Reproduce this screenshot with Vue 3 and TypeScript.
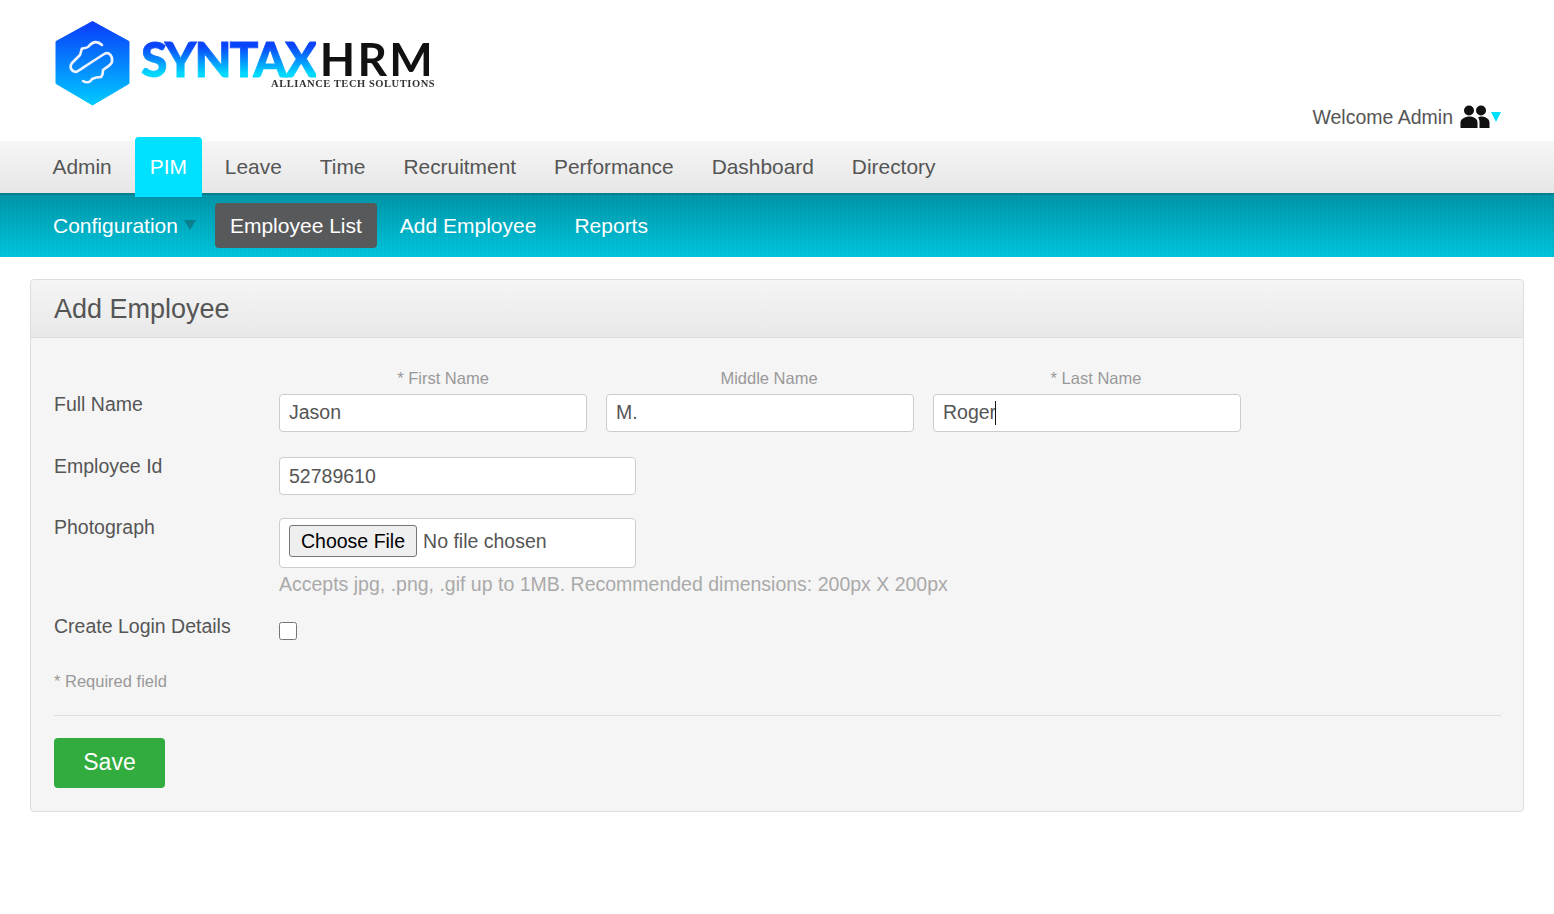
<template>
  <div class="page">
    <header class="top">
      <div class="logo">
        <svg class="hex" width="76" height="88" viewBox="0 0 76 88">
          <defs>
            <linearGradient id="hexFill" x1="0" y1="0" x2="0" y2="1">
              <stop offset="0" stop-color="#0a3cfa" />
              <stop offset="1" stop-color="#00cbff" />
            </linearGradient>
          </defs>
          <path d="M37.5 1.5 L74 21.5 L74 63.5 L37.5 85 L1 63.5 L1 21.5 Z" fill="url(#hexFill)" stroke="url(#hexFill)" stroke-width="1" stroke-linejoin="round" />
          <path d="M47 25 C43 21 38 21 34 26 C33 28 30 28 27 28.5 C26 30 26 33 25 35 L17 43 C14 47 16 51 21 52 C24 51 27 48 50 33.5 C54 32 58 36 57 42 C56 45 52 47 48 50 C48 53 47 56 46 57 C42 57 39 58 37 59 C35 63 31 63 28 61"
            fill="none" stroke="#eef3ff" stroke-width="2.6" stroke-linecap="round" stroke-linejoin="round" />
        </svg>
        <div class="brand">
          <div class="brand-name"><span class="syntax">SYNTAX</span><span class="hrm">HRM</span></div>
          <div class="tag">ALLIANCE TECH SOLUTIONS</div>
        </div>
      </div>
      <div class="welcome">
        <span>Welcome Admin</span>
        <svg class="people" width="30" height="24" viewBox="0 0 30 24">
          <circle cx="9" cy="5.5" r="5" />
          <circle cx="21" cy="5.5" r="5" />
          <path d="M0.5 23 V17.5 C0.5 14 5 11.5 9.5 11.5 C14 11.5 17.5 14 17.5 17.5 V23 Z" />
          <path d="M19.5 23 V17 C19.5 15 18.8 13.5 18 12.5 C19 12 20 11.5 21.5 11.5 C25.5 11.5 29.5 14 29.5 17.5 V23 Z" />
        </svg>
        <span class="tri"></span>
      </div>
    </header>

    <nav class="menu">
      <a v-for="item in mainMenu" :key="item" :class="{ active: item === 'PIM' }">{{ item }}</a>
    </nav>

    <nav class="submenu">
      <a class="config">Configuration<span class="tri-dark"></span></a>
      <a class="current">Employee List</a>
      <a>Add Employee</a>
      <a>Reports</a>
    </nav>

    <section class="panel">
      <h1 class="panel-head">Add Employee</h1>
      <form class="panel-body" @submit.prevent>
        <div class="row name-row">
          <label class="lbl">Full Name</label>
          <div class="names">
            <div v-for="n in names" :key="n.label" class="name-col">
              <div class="cap"><span v-if="n.required">* </span>{{ n.label }}</div>
              <div class="field">
                <input v-model="n.value" type="text" />
                <i v-if="n.caret" class="caret"></i>
              </div>
            </div>
          </div>
        </div>

        <div class="row id-row">
          <label class="lbl">Employee Id</label>
          <input v-model="employeeId" class="wide" type="text" />
        </div>

        <div class="row photo-row">
          <label class="lbl">Photograph</label>
          <div>
            <div class="file-box"><input type="file" /></div>
            <div class="hint">Accepts jpg, .png, .gif up to 1MB. Recommended dimensions: 200px X 200px</div>
          </div>
        </div>

        <div class="row login-row">
          <label class="lbl">Create Login Details</label>
          <input class="check" type="checkbox" />
        </div>

        <div class="required">* Required field</div>
        <hr />
        <button class="save" type="submit">Save</button>
      </form>
    </section>
  </div>
</template>

<script setup lang="ts">
import { ref } from 'vue'

interface NameField {
  label: string
  value: string
  required: boolean
  caret?: boolean
}

const mainMenu = ['Admin', 'PIM', 'Leave', 'Time', 'Recruitment', 'Performance', 'Dashboard', 'Directory']

const names = ref<NameField[]>([
  { label: 'First Name', value: 'Jason', required: true },
  { label: 'Middle Name', value: 'M.', required: false },
  { label: 'Last Name', value: 'Roger', required: true, caret: true },
])

const employeeId = ref('52789610')
</script>

<style>
body {
  background: #fff;
}
</style>

<style scoped>
.page {
  font-family: "Liberation Sans", Arial, sans-serif;
  color: #555;
  font-size: 19.5px;
  height: 914px;
  overflow: hidden;
}

.top {
  height: 141px;
  display: flex;
  justify-content: space-between;
  padding: 20px 53px 0 54px;
  box-sizing: border-box;
}

.logo {
  display: flex;
  height: 88px;
}

.hex {
  display: block;
  margin-left: 1px;
  filter: blur(0.4px);
}

.brand {
  margin-left: 10px;
  padding-top: 18px;
  width: 300px;
  filter: blur(0.35px);
}

.brand-name {
  display: flex;
  line-height: 42px;
  height: 42px;
}

.syntax {
  font-family: Lato, sans-serif;
  font-weight: 900;
  font-size: 48px;
  letter-spacing: -1.9px;
  background: linear-gradient(#0a44fa 20%, #00d8ff 85%);
  -webkit-background-clip: text;
  background-clip: text;
  color: transparent;
  -webkit-text-stroke: 0.8px transparent;
}

.hrm {
  font-family: Lato, sans-serif;
  font-weight: 700;
  font-size: 46px;
  letter-spacing: 2.2px;
  margin-left: 4px;
  color: #111;
}

.tag {
  font-family: "Liberation Serif", serif;
  font-weight: 700;
  font-size: 10.5px;
  letter-spacing: 0.55px;
  line-height: 12px;
  color: #333;
  margin: -2px 0 0 130px;
  white-space: nowrap;
}

.welcome {
  display: flex;
  align-items: center;
  height: 26px;
  margin-top: 84px;
}

.people {
  margin-left: 7px;
  fill: #111;
}

.tri {
  width: 0;
  height: 0;
  margin-left: 1px;
  border-left: 5px solid transparent;
  border-right: 5px solid transparent;
  border-top: 10px solid #00e1ff;
}

.menu {
  height: 52px;
  padding-left: 37.5px;
  display: flex;
  gap: 8px;
  background: linear-gradient(#f6f6f6, #e6e6e6);
  position: relative;
}

.menu a {
  padding: 0 15px;
  line-height: 52px;
  font-size: 20.9px;
}

.menu a.active {
  background: #00e1ff;
  color: #fff;
  border-radius: 4px 4px 0 0;
  height: 60px;
  margin-top: -4px;
  line-height: 60px;
  position: relative;
  z-index: 1;
}

.submenu {
  height: 64px;
  box-sizing: border-box;
  border-top: 2px solid #04808f;
  padding: 8px 0 0 38px;
  display: flex;
  gap: 8px;
  background:
    repeating-linear-gradient(90deg, rgba(0, 0, 0, 0.025) 0 2px, transparent 2px 4px),
    linear-gradient(#0096a8, #00c6de);
}

.submenu a {
  height: 45px;
  line-height: 45px;
  padding: 0 15px;
  color: #fff;
  font-size: 21px;
  border-radius: 4px;
}

.submenu a.config {
  padding-right: 29px;
  position: relative;
}

.submenu a.current {
  background: #58595b;
}

.tri-dark {
  position: absolute;
  right: 11px;
  top: 17px;
  width: 0;
  height: 0;
  border-left: 6px solid transparent;
  border-right: 6px solid transparent;
  border-top: 10px solid #0a7f8e;
}

.panel {
  margin: 22px 30px 0;
  height: 533px;
  box-sizing: border-box;
  border: 1px solid #ddd;
  border-radius: 4px;
  background: #f5f5f5;
}

.panel-head {
  margin: 0;
  height: 58px;
  box-sizing: border-box;
  line-height: 58px;
  padding-left: 23px;
  font-size: 27px;
  font-weight: 400;
  color: #555;
  background: linear-gradient(#f5f5f5, #e8e8e8);
  border-bottom: 1px solid #ddd;
  border-radius: 4px 4px 0 0;
}

.panel-body {
  padding: 0 22px 0 23px;
}

.row {
  display: flex;
  align-items: flex-start;
}

.lbl {
  width: 225px;
  flex: none;
  line-height: 24px;
  color: #555;
}

input[type="text"] {
  height: 38px;
  box-sizing: border-box;
  width: 308px;
  border: 1px solid #ccc;
  border-radius: 4px;
  padding: 0 9px 1px;
  font: inherit;
  color: #555;
  background: #fff;
  outline: none;
  display: block;
}

.name-row {
  padding-top: 30px;
}

.name-row .lbl {
  margin-top: 24px;
}

.names {
  display: flex;
  gap: 19px;
}

.cap {
  height: 26px;
  line-height: 20px;
  font-size: 16.5px;
  color: #999;
  text-align: center;
}

.name-col:nth-child(1) .cap {
  padding-left: 20px;
}

.name-col:nth-child(2) .cap,
.name-col:nth-child(3) .cap {
  padding-left: 18px;
}

.field {
  position: relative;
}

.caret {
  position: absolute;
  left: 62px;
  top: 7px;
  width: 1px;
  height: 24px;
  background: #111;
}

.id-row {
  margin-top: 25px;
}

.id-row .lbl {
  margin-top: -3px;
}

input.wide {
  width: 357px;
  padding-bottom: 0;
}

.photo-row {
  margin-top: 23px;
}

.photo-row .lbl {
  margin-top: -3px;
}

.file-box {
  width: 357px;
  height: 50px;
  box-sizing: border-box;
  border: 1px solid #ccc;
  border-radius: 4px;
  background: #fff;
  padding: 6px 9px;
}

.file-box input {
  font: inherit;
  color: #555;
  display: block;
}

.file-box input::file-selector-button {
  height: 32px;
  padding: 0 11px;
  margin-right: 6px;
  border: 1px solid #767676;
  border-radius: 3px;
  background: #efefef;
  color: #000;
  font: inherit;
}

.hint {
  margin-top: 4px;
  line-height: 24px;
  color: #aaa;
}

.login-row {
  margin-top: 19px;
}

.login-row .lbl {
  margin-top: -1px;
}

.check {
  width: 18px;
  height: 18px;
  margin: 7px 0 0;
}

.required {
  margin-top: 31px;
  font-size: 16.5px;
  line-height: 20px;
  color: #999;
}

hr {
  margin: 24px 0 22px;
  border: 0;
  border-top: 1px solid #ddd;
}

.save {
  display: block;
  width: 111px;
  height: 50px;
  padding: 0 0 2px;
  border: 0;
  border-radius: 4px;
  background: #32ab3f;
  color: #fff;
  font: inherit;
  font-size: 23px;
}
</style>
